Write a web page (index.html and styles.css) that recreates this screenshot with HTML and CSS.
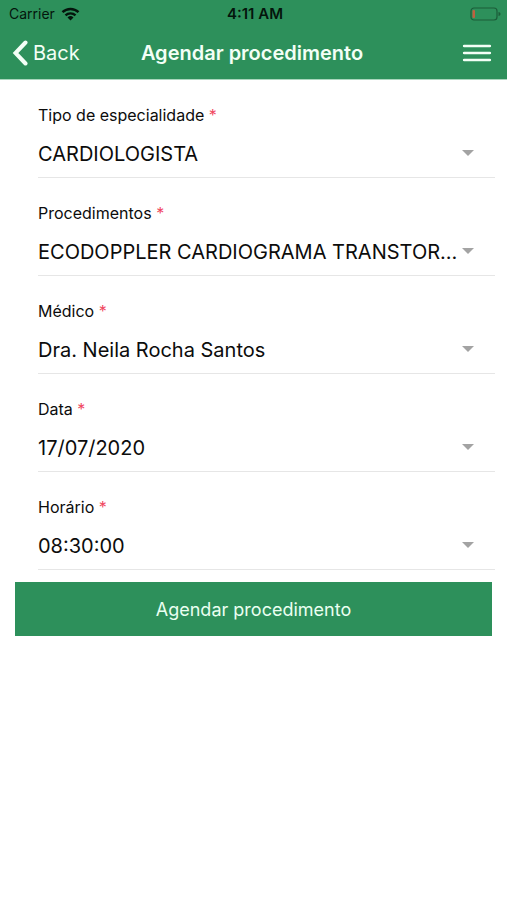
FILE: index.html
```html
<!DOCTYPE html>
<html lang="pt-BR">
<head>
  <meta charset="UTF-8" />
  <meta name="viewport" content="width=device-width, initial-scale=1.0"/>
  <title>Agendar procedimento</title>
  <link rel="stylesheet" href="styles.css">
</head>
<body>
  <header class="app-header">
    <div class="status-bar">
      <div class="carrier">
        <span>Carrier</span>
        <svg width="19" height="14" viewBox="0 0 18 14" fill="none" stroke="currentColor" stroke-width="2.4">
          <path d="M1 5.2a11.5 11.5 0 0 1 16 0"/>
          <path d="M4 8.4a7.2 7.2 0 0 1 10 0"/>
          <path d="M9 13.6l-3-3.1a4.3 4.3 0 0 1 6 0z" fill="currentColor" stroke="none"/>
        </svg>
      </div>
      <span class="time">4:11 AM</span>
      <svg class="battery" width="31" height="14" viewBox="0 0 31 14">
        <rect x="1" y="1" width="26" height="12" rx="3" fill="none" stroke="#1c5c39" stroke-width="1.2"/>
        <rect x="2.5" y="3" width="2.5" height="8" rx="1" fill="#c0603f"/>
        <path d="M28.5 5v4c1.4-.4 2-1.1 2-2s-.6-1.6-2-2z" fill="#1c5c39"/>
      </svg>
    </div>

    <nav class="nav-bar">
      <a class="back" href="#">
        <svg width="16" height="26" viewBox="0 0 16 26" fill="none" stroke="currentColor" stroke-width="4" stroke-linecap="round" stroke-linejoin="miter">
          <path d="M13.5 2.5L3.5 13l10 10.5"/>
        </svg>
        <span>Back</span>
      </a>
      <h1>Agendar procedimento</h1>
      <button class="menu" type="button" aria-label="Menu">
        <svg width="30" height="20" viewBox="0 0 30 20" stroke="currentColor" stroke-width="2.7" stroke-linecap="round">
          <path d="M2.2 3h25.6M2.2 10h25.6M2.2 17h25.6"/>
        </svg>
      </button>
    </nav>
  </header>

  <main>
    <form class="schedule-form">
      <div class="field">
        <label for="especialidade">Tipo de especialidade <span class="required">*</span></label>
        <div class="select-box">
          <select id="especialidade">
            <option>CARDIOLOGISTA</option>
          </select>
          <span class="arrow"></span>
        </div>
      </div>

      <div class="field">
        <label for="procedimento">Procedimentos <span class="required">*</span></label>
        <div class="select-box">
          <select id="procedimento">
            <option>ECODOPPLER CARDIOGRAMA TRANSTORÁCICO</option>
          </select>
          <span class="arrow"></span>
        </div>
      </div>

      <div class="field">
        <label for="medico">Médico <span class="required">*</span></label>
        <div class="select-box">
          <select id="medico">
            <option>Dra. Neila Rocha Santos</option>
          </select>
          <span class="arrow"></span>
        </div>
      </div>

      <div class="field">
        <label for="data">Data <span class="required">*</span></label>
        <div class="select-box">
          <select id="data">
            <option>17/07/2020</option>
          </select>
          <span class="arrow"></span>
        </div>
      </div>

      <div class="field">
        <label for="horario">Horário <span class="required">*</span></label>
        <div class="select-box">
          <select id="horario">
            <option>08:30:00</option>
          </select>
          <span class="arrow"></span>
        </div>
      </div>

      <button class="submit" type="submit">Agendar procedimento</button>
    </form>
  </main>
</body>
</html>
```
FILE: styles.css
```css
* {
  box-sizing: border-box;
}

body {
  margin: 0;
  background-color: #ffffff;
  color: #0c0c0c;
  font-family: Inter, "Liberation Sans", sans-serif;
}

button, select {
  font-family: inherit;
}

.app-header {
  background-color: #2d905b;
  border-bottom: 1px solid #a9d6bd;
}

.status-bar {
  display: grid;
  grid-template-columns: 1fr auto 1fr;
  align-items: center;
  height: 27px;
  padding: 0 6px 0 9px;
  font-size: 14px;
  color: #04150c;
}

.carrier {
  display: flex;
  align-items: center;
  gap: 6px;
}

.time {
  font-size: 15px;
  font-weight: 600;
}

.battery {
  justify-self: end;
}

.nav-bar {
  display: grid;
  grid-template-columns: 1fr auto 1fr;
  align-items: center;
  height: 52px;
  padding: 0 15px 0 12px;
  color: #f3fff6;
}

.back {
  display: flex;
  align-items: center;
  gap: 5px;
  font-size: 20px;
  color: inherit;
  text-decoration: none;
}

h1 {
  margin: 0;
  font-size: 20px;
  font-weight: 600;
}

.menu {
  display: flex;
  justify-self: end;
  padding: 0;
  border: none;
  background: none;
  color: inherit;
  cursor: pointer;
}

.schedule-form {
  display: flex;
  flex-direction: column;
}

.field {
  display: flex;
  flex-direction: column;
  gap: 4px;
  margin: 0 12px 0 38px;
  padding-top: 25px;
  border-bottom: 1px solid #e6e6e6;
}

.field label {
  font-size: 16px;
  line-height: 20px;
}

.required {
  color: #f0485f;
}

.select-box {
  display: grid;
  align-items: center;
}

.select-box select,
.select-box .arrow {
  grid-area: 1 / 1;
}

.select-box select {
  width: 100%;
  min-width: 0;
  height: 48px;
  padding: 2px 34px 0 0;
  border: none;
  background: none;
  color: inherit;
  font-size: 20px;
  text-overflow: ellipsis;
  cursor: pointer;
  appearance: none;
}

.arrow {
  justify-self: end;
  margin-right: 21px;
  border-top: 6px solid #a3a3a3;
  border-left: 6px solid transparent;
  border-right: 6px solid transparent;
  pointer-events: none;
}

.submit {
  height: 54px;
  margin: 12px 15px;
  border: none;
  background-color: #2d905b;
  color: #eafff1;
  font-size: 18px;
  cursor: pointer;
}
```
